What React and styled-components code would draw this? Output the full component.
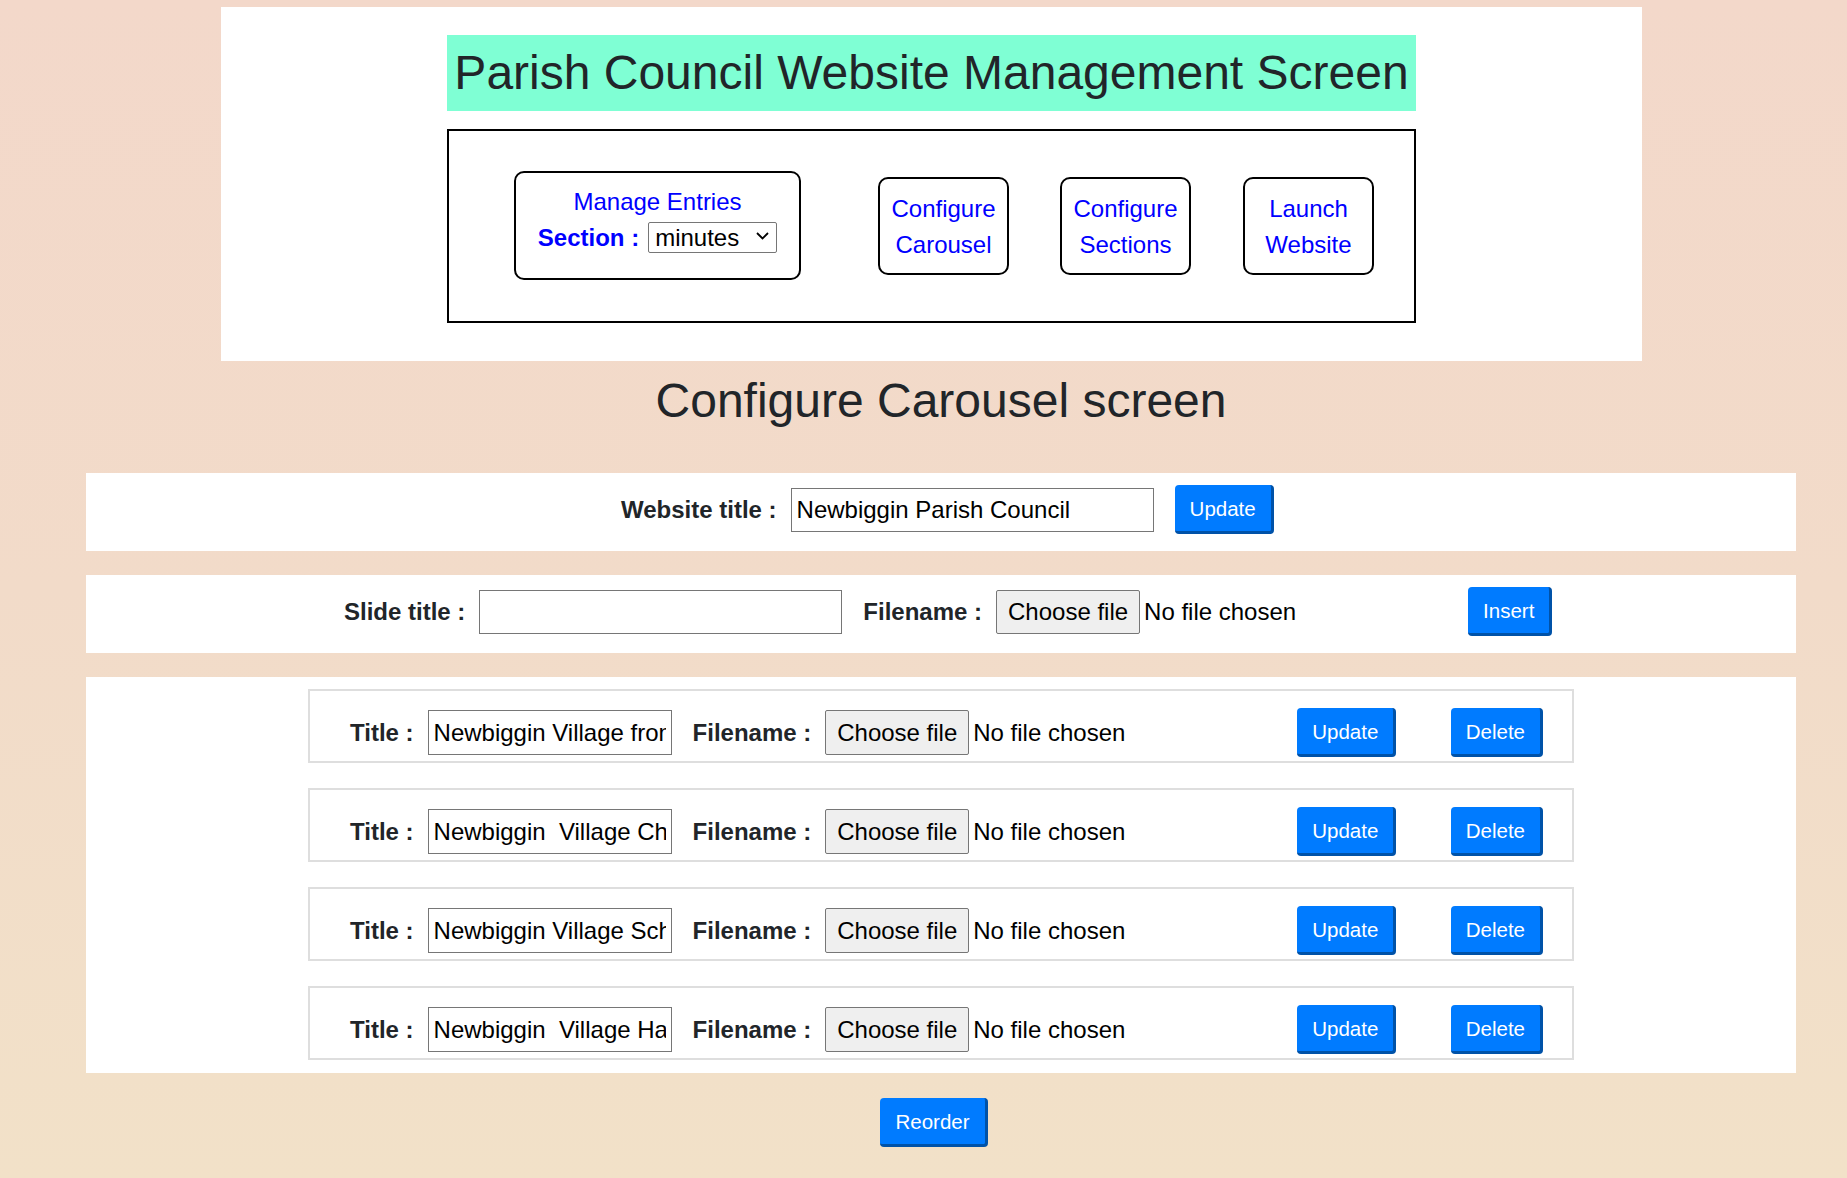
import React from 'react';
import styled, { createGlobalStyle } from 'styled-components';

const GlobalStyle = createGlobalStyle`
  html, body {
    margin: 0;
    padding: 0;
  }
  body {
    font-family: "Liberation Sans", Arial, sans-serif;
    color: #212529;
  }
  * {
    box-sizing: border-box;
  }
`;

const Page = styled.div`
  min-height: 100vh;
  padding-top: 7px;
  padding-bottom: 30px;
  background: linear-gradient(to bottom, #f3d8ca 0%, #f2dbc9 50%, #f2e1c8 100%);
`;

const HeaderPanel = styled.header`
  margin-left: 221px;
  width: 1421px;
  background: #fff;
  padding: 28px 0 38px;
  display: flex;
  flex-direction: column;
  align-items: center;
`;

const Banner = styled.h1`
  margin: 0;
  width: 969px;
  padding: 9px 0;
  background: #7fffd4;
  color: #212529;
  font-size: 48px;
  font-weight: 400;
  line-height: 1.2;
  text-align: center;
`;

const NavBox = styled.nav`
  margin-top: 18px;
  width: 969px;
  height: 194px;
  border: 2px solid #000;
  display: flex;
  align-items: center;
  padding-left: 65px;
`;

const NavCard = styled.a`
  display: block;
  width: ${({ $w }) => $w}px;
  margin-right: ${({ $mr }) => $mr || 0}px;
  padding: ${({ $pad }) => $pad || '12px 0 10px'};
  border: 2px solid #000;
  border-radius: 10px;
  color: #0000ff;
  font-size: 24px;
  line-height: 1.5;
  text-align: center;
  text-decoration: none;
  cursor: pointer;
`;

const SectionRow = styled.div`
  height: 36px;
  display: flex;
  align-items: center;
  justify-content: center;
  gap: 9px;
`;

const SectionLabel = styled.span`
  font-weight: 700;
  color: #0000ff;
`;

const SelectWrap = styled.span`
  position: relative;
  display: inline-block;
`;

const Select = styled.select`
  appearance: none;
  width: 129px;
  height: 31px;
  padding: 0 30px 0 6px;
  border: 1px solid #767676;
  border-radius: 2px;
  background: #fff;
  font-family: "Liberation Sans", Arial, sans-serif;
  font-size: 24px;
  color: #000;
`;

const Chevron = styled.svg`
  position: absolute;
  right: 8px;
  top: 12px;
  pointer-events: none;
`;

const ScreenHeading = styled.h2`
  margin: 11px 0 44px 86px;
  width: 1710px;
  font-size: 48px;
  font-weight: 400;
  line-height: 1.2;
  text-align: center;
  color: #212529;
`;

const Container = styled.main`
  margin-left: 86px;
  width: 1710px;
`;

const FormPanel = styled.section`
  background: #fff;
  display: flex;
  align-items: center;
  padding: 12px 0 17px ${({ $left }) => $left}px;
  margin-bottom: 24px;
`;

const Label = styled.label`
  font-size: 24px;
  font-weight: 700;
  color: #212529;
  margin-right: 14px;
  white-space: pre;
`;

const TextInput = styled.input`
  width: ${({ $w }) => $w}px;
  height: ${({ $h }) => $h || 44}px;
  margin-right: 21px;
  padding: 0 5px;
  border: 1px solid #767676;
  border-radius: 0;
  background: #fff;
  font-family: "Liberation Sans", Arial, sans-serif;
  font-size: 24px;
  color: #000;
`;

const FileField = styled.div`
  width: 472px;
  display: flex;
  align-items: center;
  flex-shrink: 0;
`;

const FileButton = styled.span`
  display: inline-flex;
  align-items: center;
  justify-content: center;
  width: 144px;
  height: ${({ $h }) => $h || 44}px;
  background: #efefef;
  border: 1px solid #767676;
  border-radius: 2px;
  font-size: 24px;
  color: #000;
`;

const FileStatus = styled.span`
  margin-left: 4px;
  font-size: 24px;
  color: #000;
`;

const Button = styled.button`
  padding: 9px 15px 7px;
  background: #007bff;
  color: #fff;
  border: none;
  border-right: 3px solid #0052a8;
  border-bottom: 3px solid #0052a8;
  border-radius: 4px;
  font-family: "Liberation Sans", Arial, sans-serif;
  font-size: 20.5px;
  line-height: 30px;
  cursor: pointer;
`;

const ListPanel = styled.section`
  background: #fff;
  padding: 12px 0 13px 222px;
  display: flex;
  flex-direction: column;
  gap: 25px;
`;

const SlideRow = styled.div`
  width: 1266px;
  border: 2px solid #dedede;
  padding: 17px 29px 4px 40px;
  display: flex;
  align-items: center;
`;

const Spacer = styled.div`
  flex: 1;
`;

const ReorderWrap = styled.div`
  display: flex;
  justify-content: center;
  padding: 25px 14px 0 0;
`;

const slides = [
  'Newbiggin Village from the Fell',
  'Newbiggin  Village Church',
  'Newbiggin Village School',
  'Newbiggin  Village Hall',
];

const FileInput = ({ h }) => (
  <FileField>
    <FileButton $h={h}>Choose file</FileButton>
    <FileStatus>No file chosen</FileStatus>
  </FileField>
);

const App = () => {
  return (
    <Page>
      <GlobalStyle />
      <HeaderPanel>
        <Banner>Parish Council Website Management Screen</Banner>
        <NavBox>
          <NavCard $w={287} $mr={77} $pad="11px 0 22px">
            <div>Manage Entries</div>
            <SectionRow>
              <SectionLabel>Section :</SectionLabel>
              <SelectWrap>
                <Select defaultValue="minutes">
                  <option value="minutes">minutes</option>
                  <option value="news">news</option>
                  <option value="events">events</option>
                </Select>
                <Chevron width="13" height="8" viewBox="0 0 13 8">
                  <polyline points="1,1 6.5,6.5 12,1" fill="none" stroke="#000" strokeWidth="1.8" />
                </Chevron>
              </SelectWrap>
            </SectionRow>
          </NavCard>
          <NavCard $w={131} $mr={51}>Configure<br />Carousel</NavCard>
          <NavCard $w={131} $mr={52}>Configure<br />Sections</NavCard>
          <NavCard $w={131}>Launch<br />Website</NavCard>
        </NavBox>
      </HeaderPanel>

      <ScreenHeading>Configure Carousel screen</ScreenHeading>

      <Container>
        <FormPanel $left={535}>
          <Label>Website title :</Label>
          <TextInput $w={363} defaultValue="Newbiggin Parish Council" />
          <Button>Update</Button>
        </FormPanel>

        <FormPanel $left={258}>
          <Label>Slide title :</Label>
          <TextInput $w={363} defaultValue="" />
          <Label>Filename :</Label>
          <FileInput />
          <Button>Insert</Button>
        </FormPanel>

        <ListPanel>
          {slides.map((title, i) => (
            <SlideRow key={i}>
              <Label>Title :</Label>
              <TextInput $w={244} $h={45} defaultValue={title} />
              <Label>Filename :</Label>
              <FileInput h={45} />
              <Button>Update</Button>
              <Spacer />
              <Button>Delete</Button>
            </SlideRow>
          ))}
        </ListPanel>

        <ReorderWrap>
          <Button>Reorder</Button>
        </ReorderWrap>
      </Container>
    </Page>
  );
};

export default App;
